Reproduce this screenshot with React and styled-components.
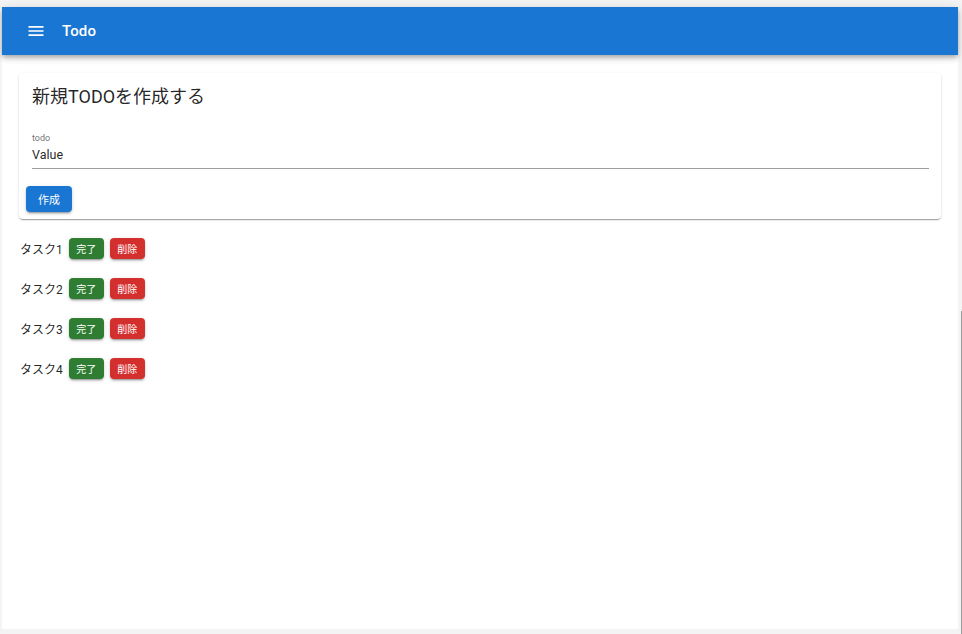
import React from 'react';
import styled, { createGlobalStyle } from 'styled-components';

const GlobalStyle = createGlobalStyle`
  html, body {
    margin: 0;
    padding: 0;
    background: #f4f4f4;
    font-family: Roboto, "Noto Sans CJK JP", "Noto Sans", sans-serif;
    color: rgba(0, 0, 0, 0.87);
  }
`;

const Page = styled.div`
  display: flex;
  height: 634px;
  padding: 7px 0 5px 2px;
  box-sizing: border-box;
`;

const Frame = styled.div`
  width: 956px;
  height: 622px;
  background: #fff;
  display: flex;
  flex-direction: column;
`;

const Gutter = styled.div`
  width: 4px;
  display: flex;
  justify-content: flex-end;
`;

const Thumb = styled.div`
  width: 1px;
  margin-top: 304px;
  margin-bottom: -5px;
  background: #9a9a9a;
`;

const AppBar = styled.header`
  height: 48px;
  background: #1976d2;
  color: #fff;
  display: flex;
  align-items: center;
  padding-left: 24px;
  box-shadow: 0 2px 4px -1px rgba(0, 0, 0, 0.2), 0 4px 5px 0 rgba(0, 0, 0, 0.14),
    0 1px 10px 0 rgba(0, 0, 0, 0.12);
  position: relative;
  z-index: 1;
`;

const MenuButton = styled.button`
  border: 0;
  background: none;
  color: inherit;
  padding: 0;
  width: 20px;
  height: 20px;
  display: flex;
  margin-right: 16px;
  svg {
    width: 20px;
    height: 20px;
    fill: currentColor;
  }
`;

const Title = styled.h1`
  margin: 0;
  font-size: 15px;
  font-weight: 500;
  letter-spacing: 0.1px;
`;

const Main = styled.main`
  padding: 18px 17px 0 17px;
`;

const Card = styled.section`
  background: #fff;
  border-radius: 4px;
  box-shadow: 0 2px 1px -1px rgba(0, 0, 0, 0.2), 0 1px 1px 0 rgba(0, 0, 0, 0.14),
    0 1px 3px 0 rgba(0, 0, 0, 0.12);
  padding: 12px 12px 6px 13px;
  height: 146px;
  box-sizing: border-box;
`;

const CardTitle = styled.h2`
  margin: 0;
  font-size: 18px;
  font-weight: 400;
  line-height: 24px;
`;

const Field = styled.label`
  display: block;
  margin-top: 23px;
  border-bottom: 1px solid #9e9e9e;
  padding-bottom: 5px;
`;

const FieldLabel = styled.span`
  display: block;
  font-size: 9px;
  line-height: 12px;
  color: rgba(0, 0, 0, 0.6);
`;

const Input = styled.input`
  display: block;
  border: 0;
  outline: none;
  padding: 0;
  margin-top: 2px;
  width: 100%;
  font-family: inherit;
  font-size: 12.5px;
  line-height: 17px;
  color: rgba(0, 0, 0, 0.87);
`;

const Button = styled.button`
  border: 0;
  border-radius: 4px;
  color: #fff;
  font-family: inherit;
  background: ${(p) => p.$color};
  font-size: ${(p) => (p.$large ? '11px' : '10px')};
  height: ${(p) => (p.$large ? '26px' : '21px')};
  padding: 0 ${(p) => (p.$large ? '12px' : '7.5px')};
  box-shadow: 0 3px 1px -2px rgba(0, 0, 0, 0.2), 0 2px 2px 0 rgba(0, 0, 0, 0.14),
    0 1px 5px 0 rgba(0, 0, 0, 0.12);
  cursor: pointer;
`;

const Actions = styled.div`
  margin: 17px 0 0 -6px;
`;

const TaskList = styled.ul`
  list-style: none;
  margin: 19px 0 0 1px;
  padding: 0;
  display: flex;
  flex-direction: column;
  gap: 19px;
`;

const TaskRow = styled.li`
  display: flex;
  align-items: center;
  gap: 6px;
  height: 21px;
`;

const TaskName = styled.span`
  font-size: 12px;
`;

const tasks = ['タスク1', 'タスク2', 'タスク3', 'タスク4'];

export default function App() {
  return (
    <>
      <GlobalStyle />
      <Page>
        <Frame>
          <AppBar>
            <MenuButton aria-label="menu">
              <svg viewBox="0 0 24 24">
                <path d="M3 18h18v-2H3zm0-5h18v-2H3zm0-7v2h18V6z" />
              </svg>
            </MenuButton>
            <Title>Todo</Title>
          </AppBar>
          <Main>
            <Card>
              <CardTitle>新規TODOを作成する</CardTitle>
              <Field>
                <FieldLabel>todo</FieldLabel>
                <Input defaultValue="Value" />
              </Field>
              <Actions>
                <Button $large $color="#1976d2">作成</Button>
              </Actions>
            </Card>
            <TaskList>
              {tasks.map((t) => (
                <TaskRow key={t}>
                  <TaskName>{t}</TaskName>
                  <Button $color="#2e7d32">完了</Button>
                  <Button $color="#d32f2f">削除</Button>
                </TaskRow>
              ))}
            </TaskList>
          </Main>
        </Frame>
        <Gutter>
          <Thumb />
        </Gutter>
      </Page>
    </>
  );
}
